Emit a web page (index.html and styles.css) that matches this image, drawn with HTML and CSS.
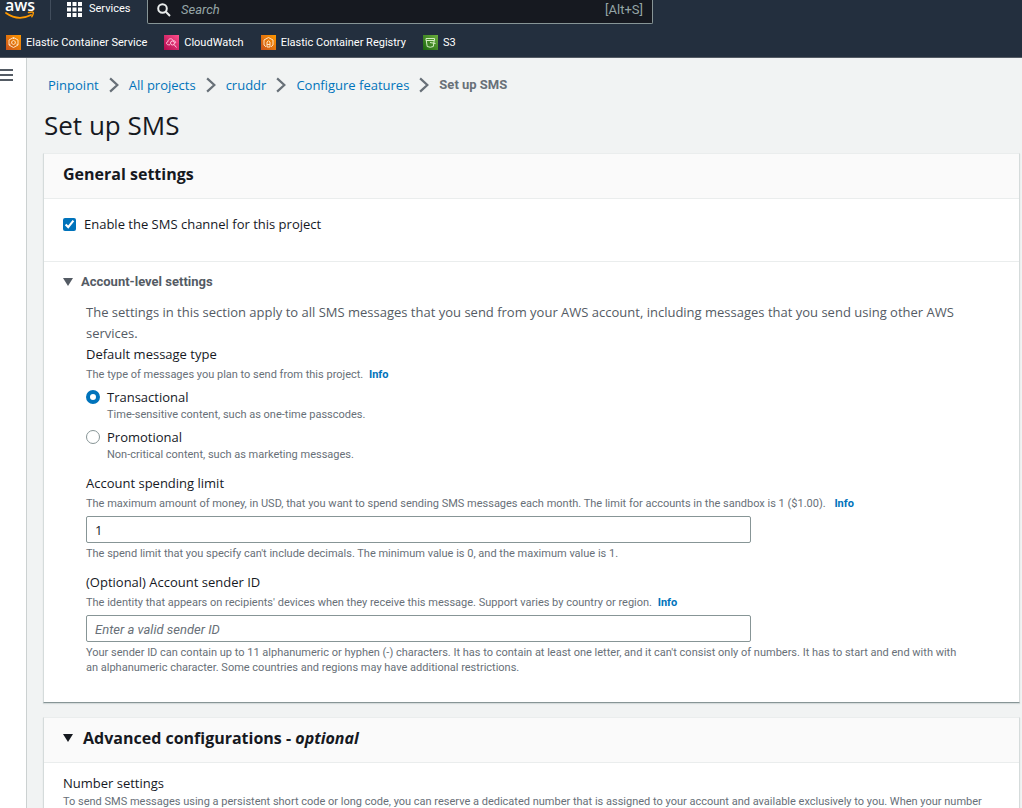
FILE: index.html
```html
<!DOCTYPE html>
<html lang="en">
<head>
<meta charset="utf-8">
<title>Set up SMS</title>
<link rel="stylesheet" href="styles.css">
</head>
<body>
<header class="topbar">
  <div class="topbar-main">
    <a class="logo" href="#" aria-label="AWS home">
      <span class="logo-text">aws</span>
      <svg class="logo-smile" width="30" height="9" viewBox="0 0 30 9" fill="none" stroke="#ff9900" stroke-linecap="round">
        <path d="M1 2 Q13 10.500 26 4" stroke-width="1.800"/>
        <path d="M23.500 1.500 Q28.500 .300 28.400 1.800 Q28.200 4 26.800 5.800" stroke-width="1.400"/>
      </svg>
    </a>
    <button class="services" type="button">
      <svg width="15" height="16" viewBox="0 0 15 16" fill="#fff">
        <path d="M0 1h4v4H0zM5.500 1h4v4h-4zM11 1h4v4h-4zM0 6.500h4v4H0zM5.500 6.500h4v4h-4zM11 6.500h4v4h-4zM0 12h4v4H0zM5.500 12h4v4h-4zM11 12h4v4h-4z"/>
      </svg>
      <span>Services</span>
    </button>
    <label class="search">
      <svg width="14" height="14" viewBox="0 0 14 14" fill="none" stroke="#eaeded" stroke-width="2">
        <circle cx="5.500" cy="5.500" r="4.300"/><path d="M8.800 8.800 13 13"/>
      </svg>
      <input class="search-input" type="search" placeholder="Search" aria-label="Search">
      <span class="search-key">[Alt+S]</span>
    </label>
  </div>
  <nav class="favorites" aria-label="Favorites">
    <a class="favorite" href="#">
      <svg class="tile tile-orange" viewBox="0 0 15 15" fill="none" stroke="#ffe3c2">
        <path d="M7.500 2.500 12 5v5l-4.500 2.500L3 10V5z"/><path d="M7.500 5.500 9.300 6.500v2l-1.800 1-1.800-1v-2z"/><path d="M7.500 2.500v1.500M3 10l1.500-.800M12 10l-1.500-.800" />
      </svg>Elastic Container Service</a>
    <a class="favorite" href="#">
      <svg class="tile tile-pink" viewBox="0 0 15 15" fill="none" stroke="#ffc4dc">
        <path d="M6 9.800H4.500C2 9.800 2 6.800 4 6.600 4 3.200 8.500 2.800 9.200 5.800c2-.300 2.800 1.200 2.300 2.400"/><circle cx="8.500" cy="8" r="2"/><path d="M10 9.500 12.500 12.500"/>
      </svg>CloudWatch</a>
    <a class="favorite" href="#">
      <svg class="tile tile-orange" viewBox="0 0 15 15" fill="none" stroke="#ffe3c2">
        <path d="M5 11.800 3 10V5l4.500-2.500L12 5v5l-2 1.800"/><path d="M6 12V7l1.500-1.200L9 7v5zM6 9.500h3"/>
      </svg>Elastic Container Registry</a>
    <a class="favorite" href="#">
      <svg class="tile tile-green" viewBox="0 0 15 15" fill="none" stroke="#d5efc4">
        <path d="M3 3.500h8.500v2H3zM3.300 5.500 4.200 11.500Q7.200 13 10.300 11.500L11.200 5.500M7 7.500 12.500 8.500"/>
      </svg>S3</a>
  </nav>
</header>
<div class="shell">
  <aside class="rail">
    <button class="rail-toggle" type="button" aria-label="Open navigation">
      <svg width="13" height="12" viewBox="0 0 13 12" fill="#545b64"><path d="M0 0h13v2H0zM0 5h13v2H0zM0 10h13v2H0z"/></svg>
    </button>
  </aside>
  <main class="page">
    <nav class="crumbs" aria-label="Breadcrumb">
      <a href="#">Pinpoint</a>
      <svg class="chevron" viewBox="0 0 9 14"><path d="M1 1l6.500 6L1 13"/></svg>
      <a href="#">All projects</a>
      <svg class="chevron" viewBox="0 0 9 14"><path d="M1 1l6.500 6L1 13"/></svg>
      <a href="#">cruddr</a>
      <svg class="chevron" viewBox="0 0 9 14"><path d="M1 1l6.500 6L1 13"/></svg>
      <a href="#">Configure features</a>
      <svg class="chevron" viewBox="0 0 9 14"><path d="M1 1l6.500 6L1 13"/></svg>
      <span class="crumb-current">Set up SMS</span>
    </nav>
    <h1 class="page-title">Set up SMS</h1>

    <section class="card">
      <h2 class="card-head">General settings</h2>
      <div class="enable">
        <label class="check-row"><input class="check" type="checkbox" checked>Enable the SMS channel for this project</label>
      </div>
      <details class="account" open>
        <summary class="account-toggle"><svg class="caret" viewBox="0 0 10 8"><path d="M0 0h10L5 8z"/></svg>Account-level settings</summary>
        <div class="account-body">
          <p class="intro">The settings in this section apply to all SMS messages that you send from your AWS account, including messages that you send using other AWS services.</p>
          <fieldset class="field">
            <legend class="label">Default message type</legend>
            <p class="hint">The type of messages you plan to send from this project. <a class="info" href="#">Info</a></p>
            <label class="option"><input class="radio" type="radio" name="type" checked><span>Transactional</span><span class="hint option-hint">Time-sensitive content, such as one-time passcodes.</span></label>
            <label class="option"><input class="radio" type="radio" name="type"><span>Promotional</span><span class="hint option-hint">Non-critical content, such as marketing messages.</span></label>
          </fieldset>
          <div class="field">
            <label class="label" for="limit">Account spending limit</label>
            <p class="hint">The maximum amount of money, in USD, that you want to spend sending SMS messages each month. The limit for accounts in the sandbox is 1 ($1.00). <a class="info info-wide" href="#">Info</a></p>
            <input class="text-input" id="limit" type="text" value="1">
            <p class="hint">The spend limit that you specify can't include decimals. The minimum value is 0, and the maximum value is 1.</p>
          </div>
          <div class="field">
            <label class="label" for="sender">(Optional) Account sender ID</label>
            <p class="hint">The identity that appears on recipients' devices when they receive this message. Support varies by country or region. <a class="info" href="#">Info</a></p>
            <input class="text-input" id="sender" type="text" placeholder="Enter a valid sender ID">
            <p class="hint hint-narrow">Your sender ID can contain up to 11 alphanumeric or hyphen (-) characters. It has to contain at least one letter, and it can't consist only of numbers. It has to start and end with with an alphanumeric character. Some countries and regions may have additional restrictions.</p>
          </div>
        </div>
      </details>
    </section>

    <details class="card" open>
      <summary class="card-head card-toggle"><svg class="caret" viewBox="0 0 10 8"><path d="M0 0h10L5 8z"/></svg><span>Advanced configurations - <em>optional</em></span></summary>
      <div class="advanced-body">
        <h3 class="label">Number settings</h3>
        <p class="hint">To send SMS messages using a persistent short code or long code, you can reserve a dedicated number that is assigned to your account and available exclusively to you. When your number</p>
      </div>
    </details>
  </main>
</div>
</body>
</html>
```
FILE: styles.css
```css
* { box-sizing: border-box; }

body {
  margin: 0;
  height: 100vh;
  overflow: hidden;
  display: flex;
  flex-direction: column;
  font: 13px/20px "Open Sans", "Noto Sans", sans-serif;
  color: #16191f;
  background: #f1f3f3;
}

h1, h2, h3, p { margin: 0; font-weight: 400; }
a { color: #0073bb; text-decoration: none; }
button, input { font: inherit; color: inherit; }
summary { list-style: none; cursor: pointer; }
svg { flex: none; }

.topbar {
  flex: none;
  background: #232f3e;
  border-bottom: 1px solid #545b64;
  color: #fff;
  font: 11px/16px Roboto, "Open Sans", sans-serif;
}
.topbar-main { display: flex; height: 24px; }
.logo {
  display: flex;
  flex-direction: column;
  justify-content: flex-end;
  width: 51px;
  height: 20px;
  padding-left: 5px;
  border-right: 1px solid #414d5c;
  color: #fff;
}
.logo-text { font: 600 16px/12px "Open Sans", sans-serif; }
.logo-smile { display: block; }
.services {
  display: flex;
  align-items: center;
  gap: 7px;
  width: 96px;
  height: 18px;
  padding: 0 0 0 16px;
  border: 0;
  background: none;
}
.search {
  display: flex;
  align-items: center;
  width: 506px;
  padding: 0 9px 3px;
  border: 1px solid #879596;
  border-top: 0;
  border-radius: 0 0 2px 2px;
  background: #161920;
  gap: 10px;
}
.search-input {
  flex: 1;
  min-width: 0;
  padding: 0;
  border: 0;
  outline: 0;
  background: none;
  font: 13px/18px Roboto, sans-serif;
}
.search-input::placeholder { color: #95a5a6; font-style: italic; opacity: 1; }
.search-key { color: #95a5a6; font-size: 13px; }

.favorites { display: flex; align-items: center; gap: 17px; height: 33px; padding: 4px 6px 0; }
.favorite { display: flex; align-items: center; gap: 5px; color: #fff; }
.tile { width: 15px; height: 15px; }
.tile-orange { background: linear-gradient(45deg, #c8511b, #f90); }
.tile-pink { background: linear-gradient(45deg, #b0084d, #ff4f8b); }
.tile-green { background: linear-gradient(45deg, #1b660f, #6cae3e); }

.shell { flex: 1; min-height: 0; display: flex; }
.rail { flex: none; width: 27px; background: #fff; border-right: 1px solid #ccd1d1; }
.rail-toggle { display: block; margin-top: 11px; padding: 0; border: 0; background: none; }
.rail-toggle svg { display: block; }

.page { flex: 1; min-width: 0; padding: 17px 2px 0 16px; overflow: hidden; }
.crumbs { display: flex; align-items: center; gap: 10px; padding-left: 5px; }
.chevron { width: 10px; height: 16px; fill: none; stroke: #687078; stroke-width: 2; }
.crumb-current { font: 700 13px/20px Roboto, sans-serif; color: #687078; }
.page-title { padding: 14px 0 12px 1px; font-size: 26px; line-height: 32px; }

.card {
  margin-bottom: 14px;
  background: #fff;
  border: 1px solid #d5dbdb;
  border-top-color: #eaeded;
  border-bottom-color: #879596;
  box-shadow: 0 1px 1px #d5dbdb;
}
.card-head {
  padding: 10px 19px 14px;
  border-bottom: 1px solid #eaeded;
  background: #fafafa;
  font-size: 16px;
  font-weight: 700;
  line-height: 20px;
}
.card-toggle { display: flex; align-items: center; gap: 10px; }
.caret { width: 10px; height: 8px; fill: currentColor; }

.enable { padding: 15px 19px 27px; border-bottom: 1px solid #eaeded; }
.check-row { display: flex; align-items: center; gap: 8px; }
.check { width: 13px; height: 13px; margin: 0; accent-color: #0073bb; }

.account { padding: 10px 19px 22px; }
.account-toggle {
  display: flex;
  align-items: center;
  gap: 8px;
  color: #545b64;
  font: 700 13px/20px Roboto, sans-serif;
}
.account-body { padding: 10px 0 0 23px; }
.intro { color: #545b64; line-height: 21px; }
.field { margin: 0 0 6px; padding: 0; border: 0; }
.field:last-child { margin-bottom: 0; }
.label { display: block; padding: 0; font-size: 13px; line-height: 20px; }
.hint { color: #687078; font: 11px/15px Roboto, sans-serif; padding: 3px 0 5px; }
.hint-narrow { max-width: 880px; }
.info { margin-left: 3px; font-weight: 700; }
.info-wide { margin-left: 6px; }
.option { display: grid; grid-template-columns: 14px 1fr; column-gap: 7px; align-items: center; line-height: 20px; }
.option-hint { grid-column: 2; padding: 0 0 5px; }
.radio {
  appearance: none;
  width: 14px;
  height: 14px;
  margin: 0;
  border: 1px solid #879596;
  border-radius: 50%;
  background: #fff;
}
.radio:checked { border: 4px solid #0073bb; }
.text-input {
  display: block;
  width: 100%;
  max-width: 665px;
  height: 27px;
  padding: 0 8px;
  border: 1px solid #879596;
  border-radius: 2px;
  background: #fff;
}
.text-input::placeholder { color: #687078; font: italic 13px Roboto, sans-serif; opacity: 1; }
.advanced-body { padding: 10px 19px; }
.advanced-body .hint { padding-top: 1px; }
```
